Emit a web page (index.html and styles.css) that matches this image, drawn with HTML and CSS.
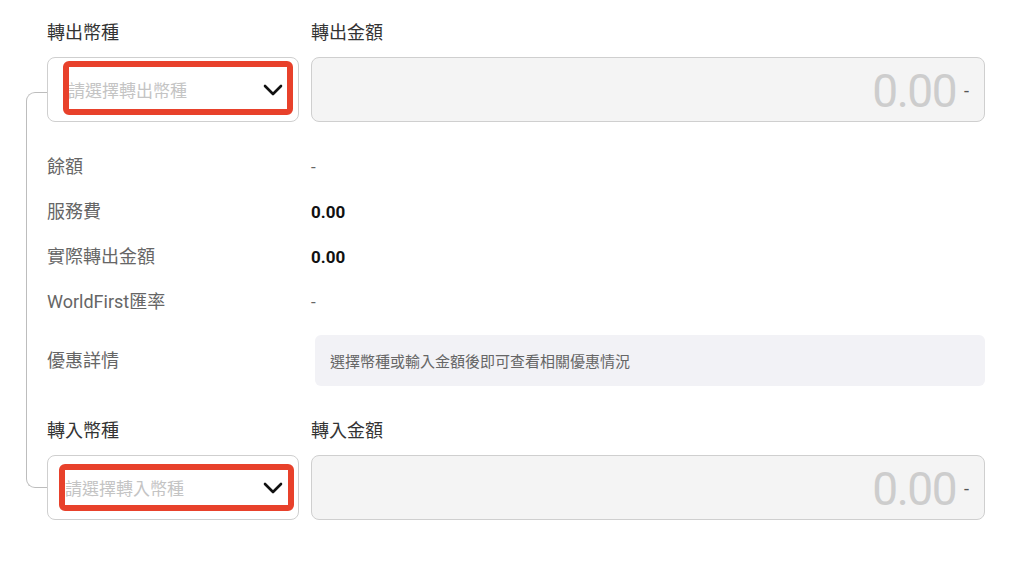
FILE: index.html
```html
<!DOCTYPE html>
<html>
<head>
    <meta charset="UTF-8">
    <title>換匯</title>
    <link rel="stylesheet" href="styles.css">
</head>
<body>
    <div class="form">
        <div class="pair">
            <div class="label">轉出幣種</div>
            <div class="label">轉出金額</div>
            <div class="select">
                <span class="placeholder">請選擇轉出幣種</span>
                <svg class="chevron" width="20" height="12" viewBox="0 0 20 12"><polyline points="2,2 10,10 18,2" fill="none" stroke="#111" stroke-width="2.6" stroke-linecap="round" stroke-linejoin="round"/></svg>
                <div class="mark mark-top"></div>
            </div>
            <div class="amount">
                <span class="num">0.00</span><span class="cur">-</span>
            </div>
        </div>

        <div class="details">
            <div class="key">餘額</div>
            <div class="val muted">-</div>
            <div class="key">服務費</div>
            <div class="val strong">0.00</div>
            <div class="key">實際轉出金額</div>
            <div class="val strong">0.00</div>
            <div class="key">WorldFirst匯率</div>
            <div class="val muted">-</div>
            <div class="key">優惠詳情</div>
            <div class="promo">選擇幣種或輸入金額後即可查看相關優惠情況</div>
        </div>

        <div class="pair">
            <div class="label">轉入幣種</div>
            <div class="label">轉入金額</div>
            <div class="select select-in">
                <span class="placeholder">請選擇轉入幣種</span>
                <svg class="chevron" width="20" height="12" viewBox="0 0 20 12"><polyline points="2,2 10,10 18,2" fill="none" stroke="#111" stroke-width="2.6" stroke-linecap="round" stroke-linejoin="round"/></svg>
                <div class="mark mark-bottom"></div>
            </div>
            <div class="amount">
                <span class="num">0.00</span><span class="cur">-</span>
            </div>
        </div>
    </div>
</body>
</html>
```

FILE: styles.css
```css
body{
    margin: 0;
    background: #fff;
    font-family: Roboto, "Noto Sans CJK TC", sans-serif;
    color: #333;
}
.form{
    position: relative;
    width: 938px;
    padding: 21px 0 40px 47px;
}
/* 左側連接線 */
.form::before{
    content: "";
    position: absolute;
    left: 26px;
    top: 92px;
    width: 21px;
    height: 396px;
    box-sizing: border-box;
    border: 1px solid #bdbdbd;
    border-right: none;
    border-radius: 9px 0 0 9px;
}
.pair{
    display: grid;
    grid-template-columns: 252px 1fr;
    column-gap: 12px;
    row-gap: 12px;
}
.label{
    font-size: 18px;
    line-height: 24px;
    color: #333;
}
.select{
    position: relative;
    height: 65px;
    box-sizing: border-box;
    border: 1px solid #cfcfcf;
    border-radius: 8px;
    display: flex;
    align-items: center;
    justify-content: space-between;
    padding: 0 15px 0 20px;
}
.select-in{
    padding-left: 17px;
}
.placeholder{
    font-size: 17px;
    color: #c4c4c4;
}
.mark{
    position: absolute;
    border: 6px solid #e8412b;
    border-radius: 6px;
    box-sizing: border-box;
}
.mark-top{
    left: 15px;
    top: 3px;
    width: 230px;
    height: 54px;
}
.mark-bottom{
    left: 11px;
    top: 8px;
    width: 235px;
    height: 47px;
}
.amount{
    height: 65px;
    box-sizing: border-box;
    border: 1px solid #cfcfcf;
    border-radius: 8px;
    background: #f4f4f4;
    display: flex;
    align-items: center;
    justify-content: flex-end;
    padding: 2px 15px 0 0;
}
.num{
    font-size: 46px;
    line-height: 1;
    letter-spacing: -1.5px;
    color: #cdcdcd;
}
.cur{
    font-size: 18px;
    color: #555;
    margin-left: 8px;
}
.details{
    display: grid;
    grid-template-columns: 264px 1fr;
    row-gap: 21px;
    align-items: center;
    margin: 33px 0 33px;
}
.key{
    font-size: 18px;
    line-height: 24px;
    color: #666;
}
.val{
    font-size: 17px;
    line-height: 24px;
}
.muted{
    color: #666;
}
.strong{
    font-weight: 700;
    color: #111;
}
.promo{
    margin: 0 0 0 4px;
    height: 51px;
    display: flex;
    align-items: center;
    padding-left: 15px;
    background: #f2f2f6;
    border-radius: 6px;
    font-size: 15px;
    color: #666;
}
```
